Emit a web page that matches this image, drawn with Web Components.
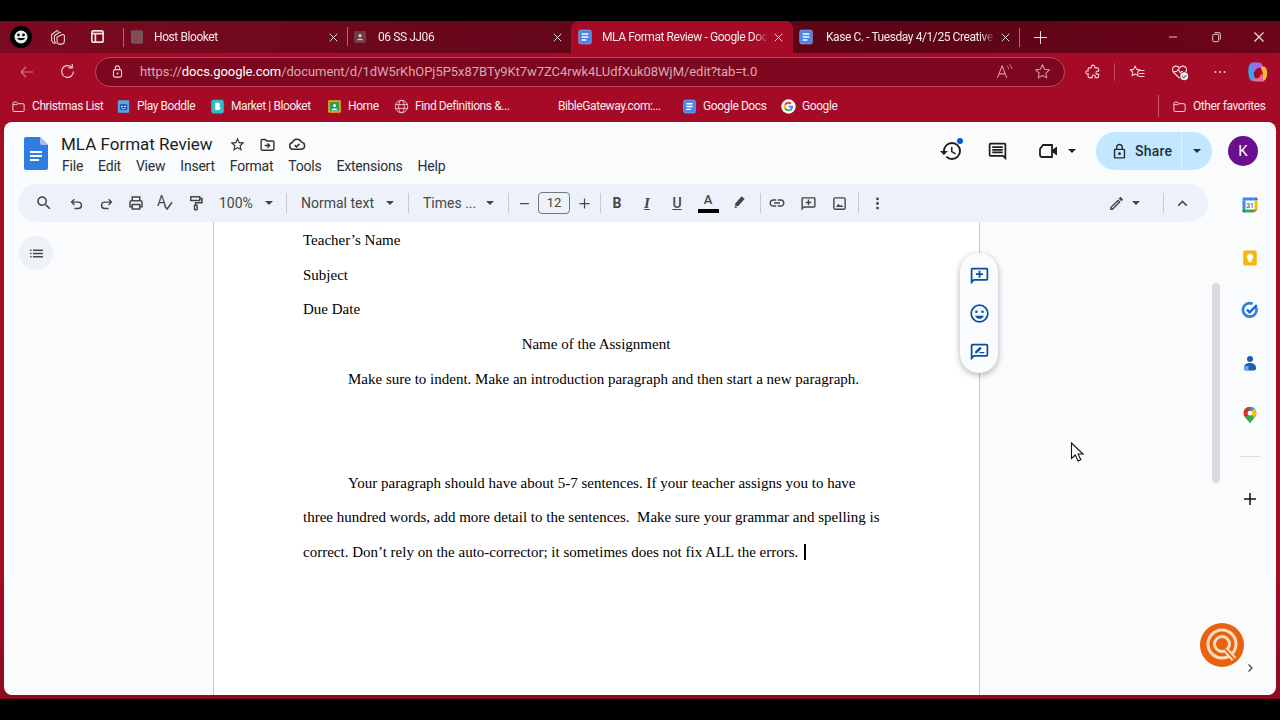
<!DOCTYPE html>
<html lang="en">
<head>
<meta charset="utf-8">
<title>MLA Format Review - Google Docs</title>
<style>
  html, body { margin: 0; height: 720px; overflow: hidden; background: #000; }
  body { padding-top: 21px; box-sizing: border-box; font-family: Roboto, "Liberation Sans", sans-serif; }
</style>
</head>
<body>
<edge-window>
  <tab-strip slot="tabs">
    <edge-tab icon="blooket-dim" width="223" gap="9">Host Blooket</edge-tab>
    <edge-tab icon="person-dim" width="224" gap="10">06 SS JJ06</edge-tab>
    <edge-tab icon="doc" width="222" gap="9" active>MLA Format Review - Google Docs</edge-tab>
    <edge-tab icon="doc" width="226" gap="12">Kase C. - Tuesday 4/1/25 Creative Writing</edge-tab>
  </tab-strip>
  <address-bar slot="address"></address-bar>
  <bookmark-bar slot="bookmarks">
    <book-mark icon="folder" w="105" style="margin-left:11px">Christmas List</book-mark>
    <book-mark icon="boddle" w="94">Play Boddle</book-mark>
    <book-mark icon="blooket" w="117">Market | Blooket</book-mark>
    <book-mark icon="classroom" w="67">Home</book-mark>
    <book-mark icon="globe" w="164">Find Definitions &amp;...</book-mark>
    <book-mark w="124">BibleGateway.com:...</book-mark>
    <book-mark icon="doc" w="99">Google Docs</book-mark>
    <book-mark icon="google" w="100">Google</book-mark>
    <span style="flex:1"></span>
    <span style="width:1px;height:22px;background:#c9566c"></span>
    <book-mark icon="folder" w="95" style="margin:0 13px">Other favorites</book-mark>
  </bookmark-bar>
  <docs-app slot="app">
    <docs-header slot="header"></docs-header>
    <docs-toolbar slot="toolbar"></docs-toolbar>
    <docs-page slot="page">
      <doc-line>Teacher’s Name</doc-line>
      <doc-line>Subject</doc-line>
      <doc-line>Due Date</doc-line>
      <doc-line center>Name of the Assignment</doc-line>
      <doc-line indent>Make sure to indent. Make an introduction paragraph and then start a new paragraph.</doc-line>
      <doc-line></doc-line>
      <doc-line></doc-line>
      <doc-line indent>Your paragraph should have about 5-7 sentences. If your teacher assigns you to have</doc-line>
      <doc-line>three hundred words, add more detail to the sentences.  Make sure your grammar and spelling is</doc-line>
      <doc-line caret>correct. Don’t rely on the auto-corrector; it sometimes does not fix ALL the errors. </doc-line>
    </docs-page>
    <side-rail slot="rail"></side-rail>
  </docs-app>
</edge-window>

<script>
const ICONS = {
  // edge chrome
  workspaces: '<g fill="none" stroke="currentColor" stroke-width="1.4"><path d="M8 20.5c-2.5-.6-4.5-3-4.5-6V9l7-5.500 2 1.200"/><path d="M10 21c-1.500-1-2.800-3-2.800-5.500v-5L14 5.500l2 1"/><path d="M13 21.500c-1.500-.6-2.300-2.300-2.300-4.500v-5L18.500 8.500 20.500 10v7c0 3-2 4.500-4 4.500z"/></g>',
  sidetabs: '<rect x="4" y="4" width="16" height="16" rx="2.5" fill="none" stroke="currentColor" stroke-width="2.4"/><path d="M4 8h16M9 8v12" stroke="currentColor" stroke-width="2.4"/>',
  close: '<path d="M6 6l12 12M18 6L6 18" stroke="currentColor" stroke-width="1.5" fill="none"/>',
  plus: '<path d="M12 3v18M3 12h18" stroke="currentColor" stroke-width="1.4" fill="none"/>',
  minimize: '<path d="M6 12h12" stroke="currentColor" stroke-width="1.3"/>',
  restore: '<path d="M7 9.500a1.500 1.500 0 0 1 1.500-1.500h6a1.500 1.500 0 0 1 1.500 1.500v8a1.500 1.500 0 0 1-1.500 1.500h-6A1.500 1.500 0 0 1 7 17.500zM10 5.500h6.500A2 2 0 0 1 18.500 7.500v8.500" fill="none" stroke="currentColor" stroke-width="1.3"/>',
  back: '<path d="M20 12H4M11 5l-7 7 7 7" fill="none" stroke="currentColor" stroke-width="1.5"/>',
  reload: '<path d="M19.500 12a7.500 7.500 0 1 1-2.400-5.500" fill="none" stroke="currentColor" stroke-width="1.5"/><path d="M18 2.500v5h-5" fill="none" stroke="currentColor" stroke-width="1.5"/>',
  padlock: '<rect x="5.500" y="9" width="13" height="12" rx="2.500" fill="none" stroke="currentColor" stroke-width="1.7"/><path d="M8.500 9V6.500a3.500 3.500 0 0 1 7 0V9" fill="none" stroke="currentColor" stroke-width="1.7"/><circle cx="12" cy="15" r="1.5" fill="currentColor"/>',
  star: '<path d="M12 3.500l2.600 5.600 6.100.7-4.500 4.200 1.200 6-5.400-3-5.400 3 1.200-6-4.500-4.200 6.100-.7z" fill="none" stroke="currentColor" stroke-width="1.3" stroke-linejoin="round"/>',
  readaloud: '<path d="M3 20L9 5l6 15M5 15h8" fill="none" stroke="currentColor" stroke-width="1.3"/><path d="M15 5c1.500 1 2.300 2.500 2.300 4M18 3c2 1.500 3 3.500 3 5.500" fill="none" stroke="currentColor" stroke-width="1.2"/>',
  puzzle: '<path d="M10 4c.8-1.500 3.200-1.500 4 0 .5 1 0 2 .5 2.500H18c.8 0 1.500.7 1.500 1.500v3c-1.800-.6-3.500.3-3.500 2s1.700 2.600 3.500 2v3c0 .8-.7 1.500-1.500 1.500h-3c.6-1.800-.3-3.500-2-3.500s-2.600 1.700-2 3.500H7c-.8 0-1.500-.7-1.500-1.500v-3.500c-1 .4-2.500 0-3-1.300-.5-1.500.5-3.200 3-2.700V8c0-.8.7-1.500 1.500-1.500h2.500c.7-.5.100-1.500.5-2.500z" fill="none" stroke="currentColor" stroke-width="1.5"/>',
  favorites: '<path d="M9.500 4l2 4.500 4.500.5-3.300 3.200.9 4.800-4.100-2.400-4.100 2.400.9-4.800L3 9l4.500-.5z" fill="none" stroke="currentColor" stroke-width="1.4" stroke-linejoin="round"/><path d="M16 10h6M15 14h7M14 18h8" stroke="currentColor" stroke-width="1.4"/>',
  health: '<path d="M12 20.500L4.500 13C2 10.500 3 6 6.800 5.200c2.200-.4 4 .6 5.200 2.300 1.200-1.700 3-2.700 5.200-2.300C21 6 22 10.500 19.500 13" fill="none" stroke="currentColor" stroke-width="1.5"/><path d="M5 12h3.500l2-3 2.500 5 1.500-2h2" fill="none" stroke="currentColor" stroke-width="1.3"/><circle cx="18" cy="18" r="5" fill="#e8edf0"/><path d="M15.500 18l2 2 3-3.500" stroke="#6b5b66" stroke-width="1.3" fill="none"/>',
  dots: '<circle cx="6" cy="12" r="1.3" fill="currentColor"/><circle cx="12" cy="12" r="1.3" fill="currentColor"/><circle cx="18" cy="12" r="1.3" fill="currentColor"/>',
  copilot: '<path d="M8 2.500c-3 .3-4 3-4.500 6-.6 4 .3 9.500 2 11.500 1.500 1.700 4.500 1.800 5 0L8.500 13 11 6z" fill="#37a6e6"/><path d="M8 2.500h6c1.500 0 2.800 1 3.300 2.500l1 3.500c-3-1.500-6-1-7.300 1L8.500 13 7 8c-.5-2 0-4.500 1-5.500z" fill="#9d6ce8"/><path d="M17 21.500c3-.3 4.500-3 5-6 .5-3.500 0-6-1.500-8-1-1.300-4-1.500-4.500.5l2 6-2.500 7z" fill="#f4b63f"/><path d="M17 21.500h-6c-1.500 0-2.700-1-3-2.500l-.3-1.500c3 1.500 6 1 7.300-1l1.500-3.500 1.500 4c.5 2 0 3.500-1 4.500z" fill="#e86a9a"/>',
  // favicons
  'blooket-dim': '<rect x="3" y="2" width="18" height="20" rx="2.5" fill="#74535b"/><path d="M9 7h4a2.500 2.500 0 0 1 1 4.700A2.700 2.700 0 0 1 13.500 17H9z" fill="#a03a50"/>',
  'person-dim': '<rect x="3" y="3" width="18" height="18" rx="2" fill="#6f3a48"/><circle cx="12" cy="10" r="2.5" fill="#d8c4ca"/><path d="M7 17c.5-3 9.500-3 10 0z" fill="#d8c4ca"/>',
  doc: '<rect x="2.500" y="1.500" width="19" height="21" rx="3" fill="#4a86e8" stroke="#cfdcf5" stroke-width=".6"/><path d="M7 7.500h10M7 12h10M7 16.500h7" stroke="#fff" stroke-width="2.2"/>',
  folder: '<path d="M3 7a2 2 0 0 1 2-2h4l2 2.500h8a2 2 0 0 1 2 2V18a2 2 0 0 1-2 2H5a2 2 0 0 1-2-2z" fill="none" stroke="#f6dfe3" stroke-width="1.5"/><path d="M3 9h7.500" stroke="#f6dfe3" stroke-width="1.3"/>',
  boddle: '<rect x="3" y="2" width="18" height="20" rx="1.5" fill="#5aa5e6"/><rect x="6" y="8" width="12" height="10" rx="2" fill="#1f60b8"/><path d="M8 12h3M13 12h3" stroke="#dff0ff" stroke-width="1.6"/><path d="M9 15.500h6" stroke="#dff0ff"/>',
  blooket: '<rect x="2" y="1" width="20" height="22" rx="3.5" fill="#33bdc8"/><path d="M8.500 6h4.700a2.800 2.800 0 0 1 1 5.400 3 3 0 0 1-1 6.100H8.500z" fill="#fff"/>',
  classroom: '<rect x="2" y="2" width="20" height="20" rx="1.5" fill="#f4b400"/><rect x="4.500" y="4.500" width="15" height="15" fill="#2e9b56"/><circle cx="12" cy="10.500" r="2.400" fill="#fff"/><path d="M7 18c.6-4 9.400-4 10 0z" fill="#fff"/>',
  globe: '<g fill="none" stroke="#f6dfe3" stroke-width="1.3"><circle cx="12" cy="12" r="10"/><ellipse cx="12" cy="12" rx="4.500" ry="10"/><path d="M2.500 9h19M2.500 15h19"/></g>',
  google: '<circle cx="12" cy="12" r="11.500" fill="#fff"/><path d="M19.200 12.200c0-.6 0-1.100-.1-1.600H12v3h4.100a3.500 3.500 0 0 1-1.500 2.300v1.900H17c1.400-1.300 2.200-3.300 2.200-5.600z" fill="#4285f4"/><path d="M12 19.500c2.100 0 3.700-.7 5-1.800l-2.400-1.900c-.7.5-1.500.8-2.600.8-2 0-3.600-1.300-4.200-3.100H5.300v1.900A7.500 7.500 0 0 0 12 19.500z" fill="#34a853"/><path d="M7.800 13.500a4.500 4.500 0 0 1 0-3V8.600H5.300a7.500 7.500 0 0 0 0 6.800z" fill="#fbbc05"/><path d="M12 7.500c1.100 0 2.100.4 2.900 1.100l2.200-2.200A7.500 7.500 0 0 0 5.300 8.600l2.500 1.900c.6-1.800 2.200-3 4.200-3z" fill="#ea4335"/>',
  // docs chrome
  docstar: '<path d="M22 9.240l-7.190-.62L12 2 9.190 8.630 2 9.240l5.460 4.730L5.820 21 12 17.270 18.180 21l-1.630-7.030L22 9.240zM12 15.400l-3.760 2.270 1-4.280-3.320-2.880 4.380-.38L12 6.100l1.710 4.040 4.380.38-3.320 2.880 1 4.280L12 15.400z" fill="currentColor"/>',
  foldermove: '<path d="M3 6.500a1.500 1.500 0 0 1 1.500-1.500H9l2 2h8.500A1.500 1.500 0 0 1 21 8.500v10a1.500 1.500 0 0 1-1.500 1.500h-15A1.500 1.500 0 0 1 3 18.500z" fill="none" stroke="currentColor" stroke-width="2"/><path d="M8 13.500h6M12 10.500l3 3-3 3" fill="none" stroke="currentColor" stroke-width="2"/>',
  cloud: '<path d="M6.500 19a4.500 4.500 0 0 1-.7-8.900A6.500 6.500 0 0 1 18 9.500a4.800 4.800 0 0 1 0 9.500z" fill="none" stroke="currentColor" stroke-width="2"/><path d="M9 13.500l2.300 2.300 4-4" fill="none" stroke="currentColor" stroke-width="2"/>',
  search: '<path d="M15.500 14h-.79l-.28-.27C15.410 12.590 16 11.110 16 9.500 16 5.910 13.090 3 9.500 3S3 5.910 3 9.500 5.910 16 9.500 16c1.610 0 3.090-.59 4.230-1.570l.27.28v.79l5 4.990L20.490 19l-4.990-5zm-6 0C7.010 14 5 11.990 5 9.500S7.010 5 9.500 5 14 7.010 14 9.500 11.990 14 9.500 14z" fill="currentColor"/>',
  undo: '<path d="M9 6L5 10l4 4M5 10h9.500a4.500 4.500 0 0 1 0 9H9" fill="none" stroke="currentColor" stroke-width="2"/>',
  redo: '<path d="M15 6l4 4-4 4M19 10H9.500a4.500 4.500 0 0 0 0 9H15" fill="none" stroke="currentColor" stroke-width="2"/>',
  print: '<path d="M7 8V4h10v4M7 17H4v-6a2 2 0 0 1 2-2h12a2 2 0 0 1 2 2v6h-3M7 14h10v6H7z" fill="none" stroke="currentColor" stroke-width="2"/>',
  check: '<path d="M10 16l3.500 4L20 11" fill="none" stroke="currentColor" stroke-width="1.9"/>',
  roller: '<path d="M5 3.500h12v5H5zM17 6h3v5.500h-8.500V15" fill="none" stroke="currentColor" stroke-width="2"/><rect x="10" y="15" width="3.500" height="6" rx=".8" fill="none" stroke="currentColor" stroke-width="2"/>',
  minus: '<path d="M5 12h14" stroke="currentColor" stroke-width="2"/>',
  add: '<path d="M12 4v16M4 12h16" stroke="currentColor" stroke-width="2"/>',
  marker: '<path d="M7 12.500L15.500 3l4 3.500L11 16H7z" fill="currentColor"/><path d="M5.500 18.500l2-2.500 2.500 2z" fill="currentColor"/>',
  link: '<path d="M3.900 12c0-1.710 1.390-3.100 3.100-3.100h4V7H7c-2.760 0-5 2.240-5 5s2.240 5 5 5h4v-1.900H7c-1.710 0-3.100-1.390-3.100-3.100zM8 13h8v-2H8v2zm9-6h-4v1.900h4c1.710 0 3.100 1.390 3.100 3.100s-1.390 3.100-3.100 3.100h-4V17h4c2.760 0 5-2.240 5-5s-2.240-5-5-5z" fill="currentColor"/>',
  addcomment: '<path d="M20 3H4c-1.100 0-2 .9-2 2v17l4-4h14c1.100 0 2-.9 2-2V5c0-1.100-.9-2-2-2zm0 13H5.200L4 17.200V5h16v11z" fill="currentColor"/><path d="M11 6.500h2v3h3v2h-3v3h-2v-3H8v-2h3z" fill="currentColor"/>',
  image: '<rect x="4" y="4" width="16" height="16" rx="2" fill="none" stroke="currentColor" stroke-width="2"/><path d="M7 17l3.500-4.500 2.500 3 1.500-2 3 3.500z" fill="currentColor"/>',
  more: '<circle cx="12" cy="5.500" r="2" fill="currentColor"/><circle cx="12" cy="12" r="2" fill="currentColor"/><circle cx="12" cy="18.500" r="2" fill="currentColor"/>',
  pen: '<path d="M3 17.250V21h3.750L17.810 9.940l-3.750-3.750L3 17.250zM5.920 19H5v-.92l9.060-9.060.92.92L5.920 19zM20.710 5.630l-2.340-2.340c-.39-.39-1.020-.39-1.410 0l-1.830 1.830 3.750 3.750 1.830-1.830c.39-.39.39-1.020 0-1.410z" fill="currentColor"/>',
  chevup: '<path d="M6 15l6-6 6 6" fill="none" stroke="currentColor" stroke-width="2"/>',
  chevright: '<path d="M9 5l7 7-7 7" fill="none" stroke="currentColor" stroke-width="2.5"/>',
  history: '<path d="M13 3a9 9 0 0 0-9 9H1l3.890 3.890.07.14L9 12H6c0-3.870 3.130-7 7-7s7 3.130 7 7-3.130 7-7 7c-1.930 0-3.680-.79-4.940-2.060l-1.420 1.420A8.954 8.954 0 0 0 13 21a9 9 0 0 0 0-18zm-1 5v5l4.280 2.540.72-1.210-3.500-2.080V8H12z" fill="currentColor"/>',
  notes: '<path d="M21.990 4c0-1.100-.89-2-1.990-2H4c-1.100 0-2 .9-2 2v12c0 1.100.9 2 2 2h14l4 4-.01-18zM20 4v13.170L18.830 16H4V4h16zM6 12h12v2H6zm0-3h12v2H6zm0-3h12v2H6z" fill="currentColor"/>',
  video: '<path d="M3 10l3-4h9v12H5a2 2 0 0 1-2-2z" fill="none" stroke="currentColor" stroke-width="1.8"/><path d="M15 11l5-3.500v9L15 13z" fill="currentColor"/>',
  lock: '<path d="M18 8h-1V6c0-2.760-2.240-5-5-5S7 3.240 7 6v2H6c-1.100 0-2 .9-2 2v10c0 1.100.9 2 2 2h12c1.100 0 2-.9 2-2V10c0-1.100-.9-2-2-2zM9 6c0-1.660 1.340-3 3-3s3 1.340 3 3v2H9V6zm9 14H6V10h12v10zm-6-3c1.100 0 2-.9 2-2s-.9-2-2-2-2 .9-2 2 .9 2 2 2z" fill="currentColor"/>',
  outline: '<path d="M3 6.500h2v2H3zM7 6.500h14v2H7zM3 11h2v2H3zM7 11h14v2H7zM3 15.500h2v2H3zM7 15.500h14v2H7z" fill="currentColor"/>',
  emoji: '<circle cx="12" cy="12" r="9.500" fill="none" stroke="currentColor" stroke-width="2"/><circle cx="8.500" cy="10" r="1.500" fill="currentColor"/><circle cx="15.500" cy="10" r="1.500" fill="currentColor"/><path d="M7 14.500h10c-1 2.500-3 3.500-5 3.500s-4-1-5-3.500z" fill="currentColor"/>',
  suggest: '<path d="M20 3H4c-1.100 0-2 .9-2 2v17l4-4h14c1.100 0 2-.9 2-2V5c0-1.100-.9-2-2-2zm0 13H5.200L4 17.200V5h16v11z" fill="currentColor"/><path d="M7 14v-2l5.500-5.500 2 2L9 14zM12 12.500h5.500V14H12z" fill="currentColor"/>',
  // side rail
  calendar: '<rect x="2" y="2" width="20" height="20" rx="1.500" fill="#fff"/><path d="M2 6V3.500A1.500 1.500 0 0 1 3.500 2H18v4z" fill="#4285f4"/><path d="M18 2h2.500A1.500 1.500 0 0 1 22 3.500V6h-4z" fill="#1a73e8"/><path d="M18 6h4v12h-4z" fill="#fbbc04"/><path d="M2 6h4v12H2z" fill="#4285f4"/><path d="M6 18h12v4H6z" fill="#34a853"/><path d="M2 18h4v4H3.500A1.500 1.500 0 0 1 2 20.500z" fill="#188038"/><path d="M18 18h4l-4 4z" fill="#ea4335"/><text x="12" y="15.500" font-size="9" font-weight="500" text-anchor="middle" fill="#1a5fb4" font-family="Roboto, sans-serif">31</text>',
  keep: '<path d="M5 2h14a2 2 0 0 1 2 2v16a2 2 0 0 1-2 2H5a2 2 0 0 1-2-2V4a2 2 0 0 1 2-2z" fill="#f4b80c"/><path d="M12 6.500a4.200 4.200 0 0 0-2.500 7.600V15.500h5v-1.400A4.200 4.200 0 0 0 12 6.500z" fill="#fff"/><path d="M10 16.800h4" stroke="#fff" stroke-width="1.5"/>',
  tasks: '<path d="M20 8.500A9 9 0 1 1 15.500 3.700" fill="none" stroke="#2f7fdb" stroke-width="3.5"/><path d="M8 11.500l3.500 3.500L21 5.500" fill="none" stroke="#1967d2" stroke-width="3.2"/>',
  contacts: '<circle cx="12" cy="6.500" r="4" fill="#1a5fb4"/><path d="M4 19c0-5 3-7 8-7s8 2 8 7c0 2-1 3-3 3H7c-2 0-3-1-3-3z" fill="#1a5fb4"/><path d="M4 17c0 3.500 1 5 3 5h3v-6H5z" fill="#6fa3ef"/>',
  maps: '<clipPath id="pin"><path d="M12 1a8.500 8.500 0 0 0-8.500 8.500C3.500 15 9.500 18 12 23.500 14.500 18 20.500 15 20.500 9.500A8.500 8.500 0 0 0 12 1z"/></clipPath><g clip-path="url(#pin)"><rect width="24" height="24" fill="#34a853"/><path d="M0 0h12v9.500L3 17H0z" fill="#d93025"/><path d="M12 0h12v5H16l-4 4.500z" fill="#4285f4"/><path d="M24 4v13h-5l-7-7.500L16.500 4z" fill="#fbbc04"/></g><circle cx="12" cy="9.500" r="3.200" fill="#fff"/>',
  logo: '<circle cx="22" cy="22" r="22" fill="#e8620f"/><circle cx="22" cy="21" r="14" fill="none" stroke="#fbdcc0" stroke-width="3"/><circle cx="22" cy="21" r="7.500" fill="none" stroke="#fbdcc0" stroke-width="3"/><path d="M25 26l9 10" stroke="#fbdcc0" stroke-width="6"/><path d="M25 26l9 10" stroke="#e8620f" stroke-width="1.8"/>',
  cursor: '<path d="M1.500 1v15.500l3.800-3.500 2.700 6 2.800-1.300-2.700-5.700H13z" fill="#fff" stroke="#111" stroke-width="1.1"/>'
};

function svg(name, size, view = 24) {
  return `<svg xmlns="http://www.w3.org/2000/svg" width="${size}" height="${size}" viewBox="0 0 ${view} ${view}" style="display:block;flex:none">${ICONS[name]}</svg>`;
}

class BaseEl extends HTMLElement {
  constructor() {
    super();
    this.attachShadow({ mode: 'open' });
  }
  connectedCallback() {
    this.render();
  }
}

class EdgeWindow extends BaseEl {
  render() {
    this.shadowRoot.innerHTML = `
      <style>
        :host { display: flex; flex-direction: column; height: 678px; background: linear-gradient(#a50a27 0, #a50a27 560px, #8c0a24 100%); }
        .app { display: block; padding: 0 4px; }
      </style>
      <slot name="tabs"></slot>
      <slot name="address"></slot>
      <slot name="bookmarks"></slot>
      <div class="app"><slot name="app"></slot></div>
    `;
  }
}

class TabStrip extends BaseEl {
  render() {
    this.shadowRoot.innerHTML = `
      <style>
        :host { display: flex; align-items: center; height: 32px; color: #f3dfe3;
          background: linear-gradient(90deg, #7c0a20, #64061a 45%, #5c0417 70%, #6c0519); }
        .avatar { width: 22px; height: 22px; border-radius: 50%; background: #000; margin-left: 10px; display: flex; align-items: center; justify-content: center; }
        .btn { width: 18px; height: 18px; }
        .sep { width: 1px; height: 19px; background: #a8687a; flex: none; }
        .right { display: flex; align-items: center; flex: 1; }
        .ctl { width: 43px; display: flex; justify-content: center; color: #f5e5e8; }
      </style>
      <div class="avatar"><svg width="16" height="16" viewBox="0 0 16 16"><circle cx="8" cy="8" r="6.5" fill="#eee"/><circle cx="5.5" cy="6" r="1.4" fill="#111"/><circle cx="10.5" cy="6" r="1.4" fill="#111"/><path d="M4 9h8c-.8 3-6.800 3-8 0z" fill="#111"/></svg></div>
      <div class="btn" style="margin-left:17px">${svg('workspaces', 18)}</div>
      <div class="btn" style="margin-left:22px">${svg('sidetabs', 17)}</div>
      <div class="sep" style="margin-left:16px"></div>
      <slot></slot>
      <div class="sep"></div>
      <div style="margin-left:12px">${svg('plus', 17)}</div>
      <div class="right">
        <span style="flex:1"></span>
        <span class="ctl">${svg('minimize', 16)}</span>
        <span class="ctl">${svg('restore', 16)}</span>
        <span class="ctl">${svg('close', 18)}</span>
      </div>
    `;
  }
}

class EdgeTab extends BaseEl {
  render() {
    const icon = this.getAttribute('icon');
    this.shadowRoot.innerHTML = `
      <style>
        :host { display: flex; align-items: center; box-sizing: border-box; height: 32px; width: ${this.getAttribute('width')}px; flex: none;
          padding: 0 6px 0 5px; color: #f7e9ec; position: relative; font: 12px Roboto, "Liberation Sans", sans-serif; letter-spacing: -.42px; }
        :host([active]) { background: #a50a27; border-radius: 8px 8px 0 0; padding: 0 7px 0 6px; }
        .title { flex: 1; min-width: 0; margin: 0 3px 0 ${this.getAttribute('gap')}px; white-space: nowrap; overflow: hidden;
          -webkit-mask-image: linear-gradient(90deg, #000 calc(100% - 14px), transparent); }
        .sep { position: absolute; left: 0; top: 6px; height: 19px; width: 1px; background: #a8687a; }
      </style>
      ${icon === 'person-dim' ? '<span class="sep"></span>' : ''}
      ${svg(icon, 16)}
      <span class="title"><slot></slot></span>
      ${svg('close', 15)}
    `;
  }
}

class AddressBar extends BaseEl {
  render() {
    this.shadowRoot.innerHTML = `
      <style>
        :host { display: flex; align-items: center; height: 37px; color: #f1d6db; }
        .nav { display: flex; justify-content: center; width: 41px; }
        .field { display: flex; align-items: center; width: 970px; height: 30px; box-sizing: border-box; flex: none; margin-left: 7px;
          border: 1px solid #c0475e; border-radius: 15px; background: #7e0720; padding: 0 10px 0 14px; }
        .url { margin-left: 15px; font: 13px Roboto, "Liberation Sans", sans-serif; letter-spacing: -.05px; color: #dba7b2; white-space: nowrap; flex: 1; }
        .url b { font-weight: 400; color: #fff; }
        .tools { display: flex; align-items: center; }
        .i { display: flex; justify-content: center; }
      </style>
      <div class="nav" style="margin-left:6px;color:#cf7a8b">${svg('back', 18)}</div>
      <div class="nav">${svg('reload', 19)}</div>
      <div class="field">
        ${svg('padlock', 15)}
        <span class="url">https://<b>docs.google.com</b>/document/d/1dW5rKhOPj5P5x87BTy9Kt7w7ZC4rwk4LUdfXuk08WjM/edit?tab=t.0</span>
        <span class="i" style="width:18px;margin-right:20px;color:#d99aa7">${svg('readaloud', 19)}</span>
        <span class="i" style="width:18px;margin-right:3px;color:#d99aa7">${svg('star', 19)}</span>
      </div>
      <div class="tools">
        <span class="i" style="margin-left:19px">${svg('puzzle', 18)}</span>
        <span style="width:1px;height:18px;background:#c0475e;margin-left:12px"></span>
        <span class="i" style="margin-left:13px">${svg('favorites', 18)}</span>
        <span class="i" style="margin-left:24px">${svg('health', 19)}</span>
        <span class="i" style="margin-left:22px">${svg('dots', 18)}</span>
        <span class="i" style="margin-left:16px">${svg('copilot', 24)}</span>
      </div>
    `;
  }
}

class BookmarkBar extends BaseEl {
  render() {
    this.shadowRoot.innerHTML = `
      <style>:host { display: flex; align-items: center; height: 32px; }</style>
      <slot></slot>
    `;
  }
}

class BookMark extends BaseEl {
  render() {
    const icon = this.getAttribute('icon');
    this.shadowRoot.innerHTML = `
      <style>
        :host { display: flex; align-items: center; gap: 6px; box-sizing: border-box; width: ${this.getAttribute('w')}px; color: #f8ecee;
          font: 12px Roboto, "Liberation Sans", sans-serif; letter-spacing: -.42px; white-space: nowrap; flex: none; }
      </style>
      ${icon ? svg(icon, 15) : ''}
      <slot></slot>
    `;
  }
}

class DocsApp extends BaseEl {
  render() {
    this.shadowRoot.innerHTML = `
      <style>
        :host { display: block; height: 573px; background: #f9fbfd; border-radius: 8px; overflow: hidden; position: relative; }
        .body { display: flex; height: 511px; }
        .main { flex: 1; min-width: 0; display: flex; flex-direction: column; height: 100%; }
        .work { flex: 1; min-height: 0; display: flex; position: relative; }
        .left { width: 209px; flex: none; padding: 14px 0 0 15px; box-sizing: border-box; }
        .outline { width: 34px; height: 34px; border-radius: 50%; background: #eef2f8; color: #444746; display: flex; align-items: center; justify-content: center; }
        .right { flex: 1; position: relative; }
        .scroll { width: 8px; height: 200px; margin: 61px 0 0 232px; border-radius: 4px; background: #dadce0; }
        .bubble { position: absolute; left: 956px; top: 31px; width: 38px; height: 120px; border-radius: 19px; background: #f9fbfd;
          box-shadow: 0 2px 6px rgba(60,64,67,.4); display: flex; flex-direction: column; align-items: center; justify-content: space-between; padding: 12px 0 11px; box-sizing: border-box; color: #0b4f9e; }
        .cursor { position: absolute; left: 1066px; top: 220px; }
      </style>
      <slot name="header"></slot>
      <div class="body">
        <div class="main">
          <slot name="toolbar"></slot>
          <div class="work">
            <div class="left"><div class="outline">${svg('outline', 17)}</div></div>
            <slot name="page"></slot>
            <div class="right"><div class="scroll"></div></div>
            <div class="bubble">${svg('addcomment', 21)}${svg('emoji', 21)}${svg('suggest', 21)}</div>
            <div class="cursor">${svg('cursor', 20, 20)}</div>
          </div>
        </div>
        <slot name="rail"></slot>
      </div>
    `;
  }
}

class DocsHeader extends BaseEl {
  render() {
    this.shadowRoot.innerHTML = `
      <style>
        :host { display: flex; height: 62px; box-sizing: border-box; padding: 9px 0 0 20px; color: #1f1f1f; font-family: Roboto, "Liberation Sans", sans-serif; }
        .logo { margin-top: 6px; flex: none; }
        .mid { margin-left: 13px; flex: 1; }
        .top { display: flex; align-items: center; height: 26px; }
        .title { font-size: 17px; }
        .menu { display: flex; font-size: 14px; letter-spacing: -.22px; color: #2a2f33; margin: -1px 0 0 1px; height: 20px; line-height: 20px; }
        .menu span { margin-right: 15px; }
        .actions { display: flex; align-items: center; height: 38px; padding-top: 1px; color: #1f1f1f; }
        .share { display: flex; align-items: center; width: 116px; height: 38px; border-radius: 19px; background: #c2e7ff; margin-left: 20px; overflow: hidden; font-size: 14px; font-weight: 500; color: #1f2f3a; letter-spacing: .2px; }
        .share .l { display: flex; align-items: center; gap: 7px; padding-left: 15px; width: 85px; box-sizing: border-box; height: 100%; }
        .share .r { flex: 1; height: 100%; border-left: 1px solid #e3f3ff; display: flex; align-items: center; justify-content: center; }
        .caret { width: 0; height: 0; border: 4px solid transparent; border-top: 4px solid currentColor; border-bottom: 0; }
        .avatar { width: 30px; height: 30px; border-radius: 50%; background: #6a0f8e; color: #fff; font-size: 15px; display: flex; align-items: center; justify-content: center; margin: 0 18px 0 16px; }
      </style>
      <svg class="logo" width="24" height="33" viewBox="0 0 24 33"><path d="M2 0h14l8 8v23a2 2 0 0 1-2 2H2a2 2 0 0 1-2-2V2a2 2 0 0 1 2-2z" fill="#2f7de1"/><path d="M16 0l8 8h-6a2 2 0 0 1-2-2z" fill="#a3c2f5"/><path d="M6 15h12M6 19h12M6 23h9" stroke="#fff" stroke-width="2"/></svg>
      <div class="mid">
        <div class="top">
          <span class="title">MLA Format Review</span>
          <span style="margin-left:16px;color:#303436">${svg('docstar', 17)}</span>
          <span style="margin-left:13px;color:#303436">${svg('foldermove', 17)}</span>
          <span style="margin-left:12px;color:#303436">${svg('cloud', 18)}</span>
        </div>
        <div class="menu"><span>File</span><span>Edit</span><span>View</span><span>Insert</span><span>Format</span><span>Tools</span><span>Extensions</span><span>Help</span></div>
      </div>
      <div class="actions">
        <span style="position:relative">${svg('history', 24)}<i style="position:absolute;right:0;top:-1px;width:6px;height:6px;border-radius:50%;background:#0b57d0"></i></span>
        <span style="margin-left:24px">${svg('notes', 21)}</span>
        <span style="margin-left:29px">${svg('video', 24)}</span>
        <span class="caret" style="margin-left:7px"></span>
        <div class="share">
          <div class="l">${svg('lock', 17)}<span>Share</span></div>
          <div class="r"><span class="caret"></span></div>
        </div>
        <div class="avatar">K</div>
      </div>
    `;
  }
}

class ToolBtn extends BaseEl {
  render() {
    const w = this.getAttribute('w') || 30;
    const size = this.getAttribute('size') || 18;
    this.shadowRoot.innerHTML = `
      <style>
        :host { display: flex; align-items: center; justify-content: center; width: ${w}px; height: 30px; flex: none; color: #444746; position: relative;
          font: 500 14px Roboto, "Liberation Sans", sans-serif; }
      </style>
      ${this.hasAttribute('icon') ? svg(this.getAttribute('icon'), size) : ''}
      <slot></slot>
    `;
  }
}

class ToolDrop extends BaseEl {
  render() {
    this.shadowRoot.innerHTML = `
      <style>
        :host { display: flex; align-items: center; box-sizing: border-box; padding-left: 7px; width: ${this.getAttribute('w')}px; height: 30px; flex: none; position: relative;
          color: #444746; font: 14px Roboto, "Liberation Sans", sans-serif; white-space: nowrap; }
        .caret { position: absolute; right: 5px; top: 13px; width: 0; height: 0; border: 4px solid transparent; border-top: 4px solid #444746; border-bottom: 0; }
      </style>
      <slot></slot><span class="caret"></span>
    `;
  }
}

class ToolSep extends BaseEl {
  render() {
    this.shadowRoot.innerHTML = `<style>:host { display: block; width: 1px; height: 20px; background: #c7c9cc; flex: none; }</style>`;
  }
}

class DocsToolbar extends BaseEl {
  render() {
    this.shadowRoot.innerHTML = `
      <style>
        :host { display: block; padding: 0 18px 0 14px; height: 38px; flex: none; }
        .pill { display: flex; align-items: center; height: 38px; border-radius: 19px; background: #edf2fa; padding-left: 11px; }
        .size { box-sizing: border-box; width: 32px; height: 22px; margin: 0 0 0 6px; border: 1px solid #747775; border-radius: 4px; text-align: center; font: 13px/20px Roboto, sans-serif; color: #444746; flex: none; }
        .a { display: flex; flex-direction: column; align-items: center; line-height: 14px; font-size: 13px; }
        .a i { display: block; width: 21px; height: 4px; background: #000; margin-top: 2px; font-style: normal; }
        .spell { position: relative; display: block; width: 18px; height: 18px; font: 14px/15px Roboto, sans-serif; color: #444746; }
        .spell svg { position: absolute; left: 0; top: 0; }
      </style>
      <div class="pill">
        <tool-btn icon="search" style="margin-right:2px"></tool-btn>
        <tool-btn icon="undo" size="17"></tool-btn>
        <tool-btn icon="redo" size="17"></tool-btn>
        <tool-btn icon="print"></tool-btn>
        <tool-btn><span class="spell">A${svg('check', 18)}</span></tool-btn>
        <tool-btn icon="roller"></tool-btn>
        <tool-drop w="67" style="padding-left:8px">100%</tool-drop>
        <tool-sep style="margin:0 7px 0 8px"></tool-sep>
        <tool-drop w="105">Normal text</tool-drop>
        <tool-sep style="margin:0 7px 0 9px"></tool-sep>
        <tool-drop w="83">Times ...</tool-drop>
        <tool-sep style="margin:0 7px 0 9px"></tool-sep>
        <tool-btn icon="minus" w="16" size="15"></tool-btn>
        <div class="size">12</div>
        <tool-btn icon="add" w="16" size="15" style="margin-left:6px"></tool-btn>
        <tool-sep style="margin:0 1px 0 8px"></tool-sep>
        <tool-btn><b>B</b></tool-btn>
        <tool-btn><i style="text-decoration:underline;font-family:'Liberation Serif',serif;font-size:15px;font-weight:700">I</i></tool-btn>
        <tool-btn><span style="text-decoration:underline">U</span></tool-btn>
        <tool-btn style="margin-left:1px"><span class="a">A<i></i></span></tool-btn>
        <tool-btn icon="marker" style="margin-left:1px" size="18"></tool-btn>
        <tool-sep style="margin:0 1px 0 6px"></tool-sep>
        <tool-btn icon="link"></tool-btn>
        <tool-btn icon="addcomment" style="margin-left:1px" size="17"></tool-btn>
        <tool-btn icon="image" style="margin-left:1px" size="17"></tool-btn>
        <tool-sep style="margin:0 3px 0 4px"></tool-sep>
        <tool-btn icon="more" size="17"></tool-btn>
        <span style="flex:1"></span>
        <tool-btn icon="pen" size="17"></tool-btn>
        <tool-drop w="14" style="margin-right:18px;padding:0"></tool-drop>
        <tool-sep style="margin-right:3px"></tool-sep>
        <tool-btn icon="chevup" size="17" style="margin-right:11px"></tool-btn>
      </div>
    `;
  }
}

class DocsPage extends BaseEl {
  render() {
    this.shadowRoot.innerHTML = `
      <style>
        :host { display: block; box-sizing: border-box; width: 767px; flex: none; background: #fff; border: 1px solid #c7c9cc; border-width: 0 1px; padding: 1px 90px 0 89px; overflow: hidden;
          font-family: "Liberation Serif", "Times New Roman", serif; color: #000; }
      </style>
      <slot></slot>
    `;
  }
}

class DocLine extends BaseEl {
  render() {
    this.shadowRoot.innerHTML = `<style>
        :host { display: block; height: 34.67px; line-height: 34.67px; font-size: 15px; }
        :host([center]) { text-align: center; }
        :host([indent]) { padding-left: 45px; }
        .t { white-space: pre; }
        .caret { display: inline-block; width: 2px; height: 16px; margin-left: 2px; background: #000; vertical-align: -3px; }
      </style><span class="t"><slot></slot>${this.hasAttribute('caret') ? '<span class="caret"></span>' : ''}</span>`;
  }
}

class SideRail extends BaseEl {
  render() {
    this.shadowRoot.innerHTML = `
      <style>
        :host { display: flex; flex-direction: column; align-items: center; width: 50px; flex: none; padding: 12px 2px 0 0; box-sizing: border-box; position: relative; }
        .i { height: 52.5px; display: flex; align-items: flex-start; justify-content: center; }
        .rule { width: 20px; height: 1px; background: #dadce0; margin-top: -3px; }
        .logo { position: absolute; left: -26px; top: 439px; }
        .chev { position: absolute; left: 18px; top: 478px; color: #444746; }
      </style>
      <div class="i">${svg('calendar', 18)}</div>
      <div class="i">${svg('keep', 18)}</div>
      <div class="i">${svg('tasks', 18)}</div>
      <div class="i">${svg('contacts', 18)}</div>
      <div class="i">${svg('maps', 18)}</div>
      <div class="rule"></div>
      <div style="margin-top:33px;color:#111">${svg('add', 18)}</div>
      <div class="logo">${svg('logo', 44, 44)}</div>
      <div class="chev">${svg('chevright', 12)}</div>
    `;
  }
}

customElements.define('edge-window', EdgeWindow);
customElements.define('tab-strip', TabStrip);
customElements.define('edge-tab', EdgeTab);
customElements.define('address-bar', AddressBar);
customElements.define('bookmark-bar', BookmarkBar);
customElements.define('book-mark', BookMark);
customElements.define('docs-app', DocsApp);
customElements.define('docs-header', DocsHeader);
customElements.define('tool-btn', ToolBtn);
customElements.define('tool-drop', ToolDrop);
customElements.define('tool-sep', ToolSep);
customElements.define('docs-toolbar', DocsToolbar);
customElements.define('docs-page', DocsPage);
customElements.define('doc-line', DocLine);
customElements.define('side-rail', SideRail);
</script>
</body>
</html>
